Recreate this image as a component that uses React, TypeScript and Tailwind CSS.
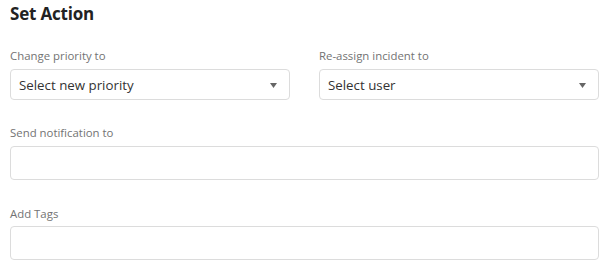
import React from "react";

function Select({ label }: { label: string }) {
  return (
    <div className="flex h-[31px] items-center justify-between rounded-[4px] border border-[#dcdcdc] bg-white pl-[8px] pr-[12px]">
      <span className="pt-[1px] text-[13.3px] leading-[20px] text-[#333333]">{label}</span>
      <svg width="7" height="5" viewBox="0 0 7 5" className="mt-[1px]">
        <polygon points="0,0 7,0 3.5,5" fill="#666666" />
      </svg>
    </div>
  );
}

function Label({ children }: { children: React.ReactNode }) {
  return <div className="text-[11.4px] leading-[16px] text-[#737373]">{children}</div>;
}

export default function App() {
  return (
    <div className="h-[263px] w-[608px] bg-white pl-[10px] pr-[9px] font-['Open_Sans',sans-serif]">
      <h2 className="pt-[2px] text-[17px] font-bold leading-[24px] tracking-[-0.2px] text-[#222222]">Set Action</h2>
      <div className="mt-[22px] grid grid-cols-2 gap-x-[29px]">
        <div className="flex flex-col gap-[5px]">
          <Label>Change priority to</Label>
          <Select label="Select new priority" />
        </div>
        <div className="flex flex-col gap-[5px]">
          <Label>Re-assign incident to</Label>
          <Select label="Select user" />
        </div>
      </div>
      <div className="mt-[25px] flex flex-col gap-[5px]">
        <Label>Send notification to</Label>
        <div className="h-[34px] rounded-[4px] border border-[#dcdcdc] bg-white" />
      </div>
      <div className="mt-[26px] flex flex-col gap-[4px]">
        <Label>Add Tags</Label>
        <div className="h-[34px] rounded-[4px] border border-[#dcdcdc] bg-white" />
      </div>
    </div>
  );
}
